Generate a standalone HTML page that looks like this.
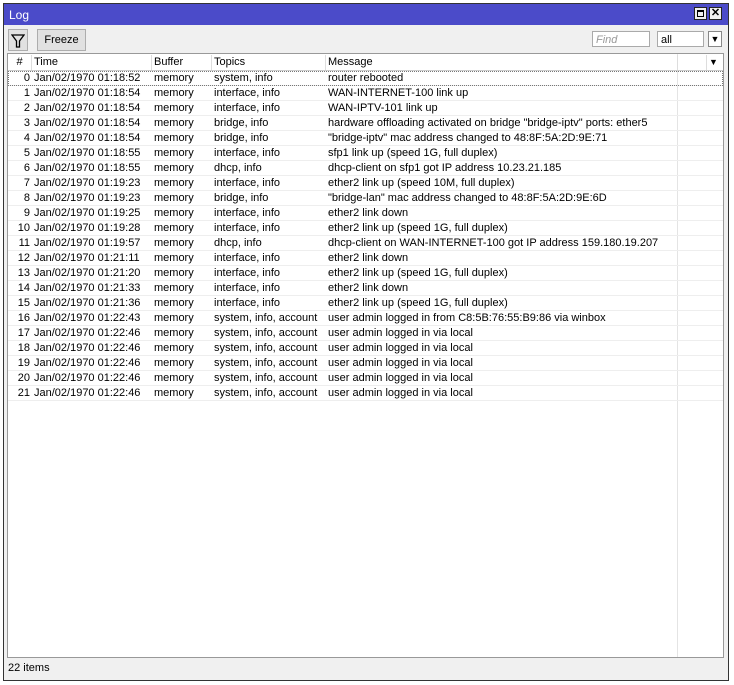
<!DOCTYPE html><html><head><style>
body{margin:0;width:734px;height:685px;background:#fff;position:relative;font-family:"Liberation Sans",sans-serif;font-size:11px;color:#000;overflow:hidden}
.win{position:absolute;left:3px;top:3px;width:724px;height:676px;border:1px solid #333;background:#f0f0f0}
.title{position:absolute;left:0;top:0;width:724px;height:21px;background:#4b4bc9;color:#fff;font-size:12px}
.title span{position:absolute;left:5px;top:4px}
.tb{position:absolute;top:3px;width:13px;height:13px;background:#f0f0f0;border:1px solid #222;box-sizing:border-box;font-size:11px;line-height:11px;text-align:center;color:#000;font-weight:bold}
.btn{position:absolute;border:1px solid #adadad;background:#e1e1e1;box-sizing:border-box}
.tbl{position:absolute;left:3px;top:49px;width:717px;height:605px;background:#fff;border:1px solid #999;box-sizing:border-box;overflow:hidden}
.hd{position:absolute;left:0;top:0;width:717px;height:17px;border-bottom:1px solid #ccc;box-sizing:border-box}
.hd .c{border-right:1px solid #ddd}
.c{position:absolute;top:0;height:15px;line-height:15px;white-space:nowrap;box-sizing:border-box;padding-left:2px}
.row{position:absolute;left:0;width:715px;height:15px;border-bottom:1px solid #eee;box-sizing:border-box}
.status{position:absolute;left:0;top:654px;width:724px;height:22px}
</style></head><body>
<div class="win">
<div class="title"><span>Log</span>
<div class="tb" style="left:690px"><div style="position:absolute;left:2px;top:2px;width:7px;height:7px;border:1px solid #000;border-top-width:2px;box-sizing:border-box"></div></div>
<div class="tb" style="left:705px">✕</div></div>
<div class="btn" style="left:4px;top:25px;width:20px;height:22px;text-align:center;line-height:20px;font-size:14px">
<svg width="14" height="16" viewBox="0 0 14 16" style="margin-top:3px"><path d="M1 2H13L8.5 8V14H5.5V8Z" fill="none" stroke="#000" stroke-width="1.3"/></svg></div>
<div class="btn" style="left:33px;top:25px;width:49px;height:22px;line-height:20px;text-align:center">Freeze</div>
<div style="position:absolute;left:588px;top:27px;width:58px;height:16px;background:#fff;border:1px solid #aaa;color:#999;font-style:italic;line-height:16px;padding-left:3px;box-sizing:border-box">Find</div>
<div style="position:absolute;left:653px;top:27px;width:47px;height:16px;background:#fff;border:1px solid #aaa;line-height:16px;padding-left:3px;box-sizing:border-box">all</div>
<div style="position:absolute;left:704px;top:27px;width:14px;height:16px;background:#fff;border:1px solid #888;box-sizing:border-box;font-size:9px;text-align:center;line-height:14px">▼</div>
<div class="tbl">
<div style="position:absolute;left:669px;top:0;width:1px;height:605px;background:#e4e4e4"></div>
<div class="hd">
<div class="c" style="left:0;width:24px;text-align:center;padding:0;top:1px">#</div>
<div class="c" style="left:24px;width:120px;top:1px">Time</div>
<div class="c" style="left:144px;width:60px;top:1px">Buffer</div>
<div class="c" style="left:204px;width:114px;top:1px">Topics</div>
<div class="c" style="left:318px;width:352px;top:1px">Message</div>
<div class="c" style="left:670px;width:29px;top:1px"></div>
<div class="c" style="left:699px;width:17px;top:1px;border:0;font-size:9px">▼</div>
</div>
<div id="rows"></div>
</div>
<div class="status"><span style="position:absolute;left:4px;top:4px">22 items</span></div>
</div>
<script>
var d=[["01:18:52","system, info","router rebooted"],["01:18:54","interface, info","WAN-INTERNET-100 link up"],["01:18:54","interface, info","WAN-IPTV-101 link up"],["01:18:54","bridge, info","hardware offloading activated on bridge \"bridge-iptv\" ports: ether5"],["01:18:54","bridge, info","\"bridge-iptv\" mac address changed to 48:8F:5A:2D:9E:71"],["01:18:55","interface, info","sfp1 link up (speed 1G, full duplex)"],["01:18:55","dhcp, info","dhcp-client on sfp1 got IP address 10.23.21.185"],["01:19:23","interface, info","ether2 link up (speed 10M, full duplex)"],["01:19:23","bridge, info","\"bridge-lan\" mac address changed to 48:8F:5A:2D:9E:6D"],["01:19:25","interface, info","ether2 link down"],["01:19:28","interface, info","ether2 link up (speed 1G, full duplex)"],["01:19:57","dhcp, info","dhcp-client on WAN-INTERNET-100 got IP address 159.180.19.207"],["01:21:11","interface, info","ether2 link down"],["01:21:20","interface, info","ether2 link up (speed 1G, full duplex)"],["01:21:33","interface, info","ether2 link down"],["01:21:36","interface, info","ether2 link up (speed 1G, full duplex)"],["01:22:43","system, info, account","user admin logged in from C8:5B:76:55:B9:86 via winbox"],["01:22:46","system, info, account","user admin logged in via local"],["01:22:46","system, info, account","user admin logged in via local"],["01:22:46","system, info, account","user admin logged in via local"],["01:22:46","system, info, account","user admin logged in via local"],["01:22:46","system, info, account","user admin logged in via local"]];
var h="";d.forEach(function(r,i){h+='<div class="row" style="top:'+(17+i*15)+'px'+(i==0?';outline:1px dotted #777;outline-offset:-1px':'')+'"><div class="c" style="left:0;width:24px;text-align:right;padding:0 2px 0 0">'+i+'</div><div class="c" style="left:24px;width:120px">Jan/02/1970 '+r[0]+'</div><div class="c" style="left:144px;width:60px">memory</div><div class="c" style="left:204px;width:114px">'+r[1]+'</div><div class="c" style="left:318px;width:352px">'+r[2].replace(/"/g,'&quot;')+'</div></div>'});
document.getElementById("rows").innerHTML=h;
</script>
</body></html>
